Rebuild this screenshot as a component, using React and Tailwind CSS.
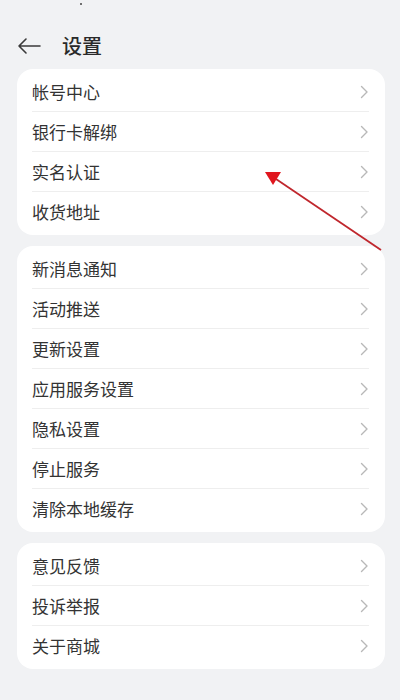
import React from "react";

const groups = [
  ["帐号中心", "银行卡解绑", "实名认证", "收货地址"],
  ["新消息通知", "活动推送", "更新设置", "应用服务设置", "隐私设置", "停止服务", "清除本地缓存"],
  ["意见反馈", "投诉举报", "关于商城"],
];

function Chevron() {
  return (
    <svg width="9" height="14" viewBox="0 0 9 14" fill="none" className="shrink-0">
      <path d="M1.5 1.5 L7 7 L1.5 12.5" stroke="#b8b8b8" strokeWidth="1.4" strokeLinecap="round" strokeLinejoin="round" />
    </svg>
  );
}

export default function App() {
  return (
    <div
      className="relative w-[400px] h-[700px] bg-[#f1f2f4] overflow-hidden"
      style={{ fontFamily: '"Noto Sans CJK SC", "Noto Sans", sans-serif' }}
    >
      <div className="flex items-center h-[94px] pb-[2px] pl-[17px]">
        <svg width="24" height="18" viewBox="0 0 24 18" fill="none">
          <path d="M23 9 H2 M9 2 L2 9 L9 16" stroke="#3a3a3a" strokeWidth="1.6" strokeLinecap="round" strokeLinejoin="round" />
        </svg>
        <span className="ml-[21px] text-[20px] text-[#2a2a2a] font-medium">设置</span>
      </div>
      <div className="flex flex-col gap-[11px] pl-[17px] pr-[15px] -mt-[25px]">
        {groups.map((g, gi) => (
          <div key={gi} className="bg-white rounded-[16px] py-[3px]">
            {g.map((t, i) => (
              <div key={t} className="pl-[15px] pr-[16px]">
                <div
                  className={
                    "flex items-center justify-between h-[40px] " +
                    (i < g.length - 1 ? "border-b border-[#eeeeee]" : "")
                  }
                >
                  <span className="text-[17px] text-[#333333]">{t}</span>
                  <Chevron />
                </div>
              </div>
            ))}
          </div>
        ))}
      </div>
      <svg className="absolute left-0 top-0 pointer-events-none" width="400" height="700">
        <line x1="381" y1="250" x2="276" y2="179" stroke="#c0272d" strokeWidth="1.8" />
        <polygon points="265,172 281,172 273,185" fill="#e0161e" />
      </svg>
      <div className="absolute left-[80px] top-[3px] w-[2px] h-[2px] bg-[#444] rounded-full" />
    </div>
  );
}
